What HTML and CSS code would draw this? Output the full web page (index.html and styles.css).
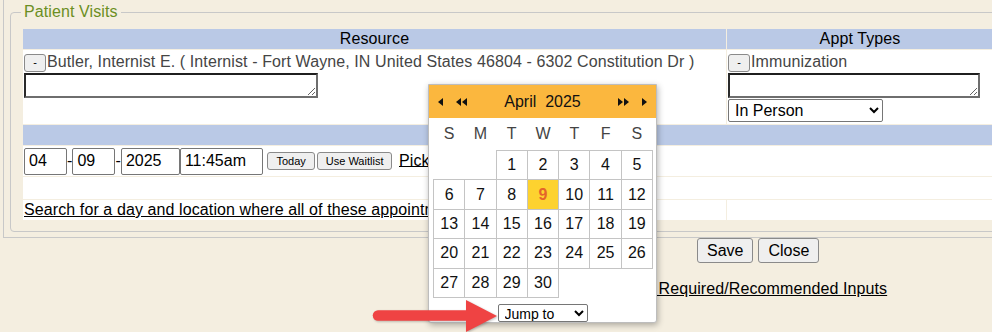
FILE: index.html
```html
<!DOCTYPE html>
<html>
<head>
  <link rel="stylesheet" href="styles.css">
</head>
<body>
  <div class="page">
    <div class="outer">
      <fieldset class="visits">
        <legend>Patient Visits</legend>
        <table class="grid">
          <colgroup><col class="col-res"><col class="col-appt"></colgroup>
          <tr class="head-row">
            <th>Resource</th>
            <th>Appt Types</th>
          </tr>
          <tr class="pick-row">
            <td>
              <div class="line"><button class="minus-btn">-</button><span class="res-name">Butler, Internist E. ( Internist - Fort Wayne, IN United States 46804 - 6302 Constitution Dr )</span></div>
              <textarea class="note note-res"></textarea>
            </td>
            <td>
              <div class="line"><button class="minus-btn">-</button><span class="appt-name">Immunization</span></div>
              <textarea class="note note-appt"></textarea>
              <select class="mode"><option>In Person</option><option>Telehealth</option></select>
            </td>
          </tr>
          <tr class="band-row">
            <td colspan="2"></td>
          </tr>
          <tr class="date-row">
            <td colspan="2"><input class="f f-mm" value="04">-<input class="f f-dd" value="09">-<input class="f f-yy" value="2025"><input class="f f-tm" value="11:45am"> <button class="small-btn">Today</button><button class="small-btn">Use Waitlist</button> <a href="#">Pick a time</a></td>
          </tr>
          <tr class="blank-row">
            <td colspan="2"></td>
          </tr>
          <tr class="search-row">
            <td><a href="#">Search for a day and location where all of these appointments are available</a></td>
            <td></td>
          </tr>
        </table>
      </fieldset>
    </div>
    <div class="actions">
      <button class="big-btn">Save</button>
      <button class="big-btn">Close</button>
    </div>
    <div class="req"><a href="#">&nbsp;Required/Recommended Inputs</a></div>
  </div>

  <!-- date picker popup, open over the form -->
  <div class="cal">
    <div class="cal-head">
      <span class="nav">
        <svg width="5" height="8" viewBox="0 0 5 8"><polygon points="5,0 0,4 5,8"/></svg>
        <svg width="11" height="8" viewBox="0 0 11 8"><polygon points="5,0 0,4 5,8"/><polygon points="11,0 6,4 11,8"/></svg>
      </span>
      <span class="cal-title">April&nbsp;&nbsp;2025</span>
      <span class="nav">
        <svg width="11" height="8" viewBox="0 0 11 8"><polygon points="0,0 5,4 0,8"/><polygon points="6,0 11,4 6,8"/></svg>
        <svg width="5" height="8" viewBox="0 0 5 8"><polygon points="0,0 5,4 0,8"/></svg>
      </span>
    </div>
    <table class="days">
      <thead>
        <tr><th>S</th><th>M</th><th>T</th><th>W</th><th>T</th><th>F</th><th>S</th></tr>
      </thead>
      <tbody>
        <tr><td class="off"></td><td class="off"></td><td>1</td><td>2</td><td>3</td><td>4</td><td>5</td></tr>
        <tr><td>6</td><td>7</td><td>8</td><td class="today">9</td><td>10</td><td>11</td><td>12</td></tr>
        <tr><td>13</td><td>14</td><td>15</td><td>16</td><td>17</td><td>18</td><td>19</td></tr>
        <tr><td>20</td><td>21</td><td>22</td><td>23</td><td>24</td><td>25</td><td>26</td></tr>
        <tr><td>27</td><td>28</td><td>29</td><td>30</td><td class="off"></td><td class="off"></td><td class="off"></td></tr>
      </tbody>
    </table>
    <div class="jump">
      <select><option>Jump to</option><option>Today</option></select>
    </div>
  </div>

  <svg class="pointer" width="132" height="36" viewBox="0 0 132 36">
    <line x1="10" y1="19.5" x2="100" y2="19.5" stroke="#ef4343" stroke-width="10.5" stroke-linecap="round"/>
    <polygon points="98,4 129,20 98,36" fill="#ef4343"/>
  </svg>
</body>
</html>
```

FILE: styles.css
```css
html, body {
  overflow: hidden;
}

body {
  margin: 0;
  background-color: #f4eee0;
  font-family: "Liberation Sans", Arial, sans-serif;
  font-size: 16px;
  letter-spacing: 0.1px;
  color: #000;
}

a {
  color: #000;
}

.page {
  width: 1100px;
}

.outer {
  margin-left: 3px;
  border-left: 1px solid #c8c8c8;
  border-bottom: 1px solid #c8c8c8;
  padding: 3px 0 5px 6px;
}

.visits {
  margin: 0;
  padding: 7px 11px 10px 11px;
  border: 1px solid #c8c8c8;
  border-radius: 4px;
  min-width: 0;
}

.visits legend {
  margin-left: -1px;
  padding: 0 3px;
  line-height: 18px;
  color: #6b8e23;
}

.grid {
  width: 972px;
  table-layout: fixed;
  border-spacing: 1px;
}

.col-res {
  width: 703px;
}

.col-appt {
  width: 266px;
}

.grid th,
.grid td {
  padding: 1px;
  vertical-align: top;
  background-color: #fff;
}

.grid th {
  background-color: #bac9e6;
  font-weight: normal;
  line-height: 18px;
}

.head-row { height: 20px; }
.pick-row { height: 74px; }
.band-row { height: 20px; }
.date-row { height: 30px; }
.blank-row { height: 22px; }
.search-row { height: 20px; }

.grid .band-row td {
  background-color: #bac9e6;
}

.line {
  display: flex;
  align-items: flex-start;
  height: 22px;
  line-height: 22px;
}

.res-name,
.appt-name {
  color: #454545;
}

.minus-btn {
  width: 22px;
  height: 18px;
  margin: 3px 1px 0 0;
  padding: 0 0 2px 0;
  font-family: "Liberation Sans", Arial, sans-serif;
  font-size: 11px;
  background-color: #efefef;
  border: 1px solid #8a8a8a;
  border-radius: 3px;
}

.note {
  display: block;
  box-sizing: border-box;
  height: 25px;
  margin: 0;
  border: 2px solid;
  border-color: #1f1f1f #6e6e6e #6e6e6e #2a2a2a;
  background-color: #fff;
}

.note-res {
  width: 294px;
}

.note-appt {
  width: 252px;
}

.mode {
  display: block;
  box-sizing: border-box;
  width: 155px;
  height: 23px;
  margin-top: 1px;
  padding: 0 2px;
  font-family: "Liberation Sans", Arial, sans-serif;
  font-size: 16px;
  color: #000;
  background-color: #fff;
  border: 1px solid #767676;
  border-radius: 2px;
}

.grid .date-row td {
  vertical-align: middle;
  padding: 0 1px;
  white-space: nowrap;
  overflow: hidden;
}

.f {
  box-sizing: border-box;
  height: 27px;
  margin: 0;
  padding: 1px 4px;
  font-family: "Liberation Sans", Arial, sans-serif;
  font-size: 16px;
  color: #000;
  border: 1px solid #767676;
  border-radius: 2px;
  vertical-align: middle;
}

.f-mm, .f-dd { width: 43px; }
.f-yy { width: 59px; }
.f-tm { width: 83px; }

.small-btn {
  height: 18px;
  margin: 0 2px 0 0;
  padding: 0 8px;
  font-family: "Liberation Sans", Arial, sans-serif;
  font-size: 11px;
  color: #000;
  background-color: #efefef;
  border: 1px solid #8a8a8a;
  border-radius: 3px;
  vertical-align: middle;
}

.actions {
  display: flex;
  gap: 5px;
  padding-left: 697px;
}

.big-btn {
  height: 25px;
  margin: 0;
  padding: 0 9px;
  font-family: "Liberation Sans", Arial, sans-serif;
  font-size: 16px;
  color: #000;
  background-color: #efefef;
  border: 1px solid #8a8a8a;
  border-radius: 3px;
}

.req {
  margin-top: 17px;
  padding-left: 654px;
  line-height: 18px;
}

/* calendar popup */
.cal {
  position: absolute;
  left: 428px;
  top: 84px;
  width: 229px;
  height: 239px;
  box-sizing: border-box;
  background-color: #fff;
  border: 1px solid #bdbdbd;
  border-radius: 0 0 3px 3px;
  box-shadow: 1px 2px 6px rgba(0, 0, 0, 0.3);
  letter-spacing: 0;
}

.cal-head {
  display: flex;
  align-items: center;
  height: 33px;
  padding: 0 9px;
  background-color: #fbb73e;
  color: #111;
}

.nav {
  display: flex;
  align-items: center;
  gap: 13px;
}

.nav svg {
  display: block;
  fill: #111;
}

.cal-title {
  flex: 1;
  text-align: center;
}

.days {
  width: 220px;
  margin: 0 4px;
  table-layout: fixed;
  border-collapse: collapse;
}

.days th {
  height: 32px;
  padding: 0;
  font-weight: normal;
  color: #444;
}

.days tbody tr {
  height: 29.4px;
}

.days td {
  padding: 0;
  text-align: center;
  color: #111;
  border: 1px solid #c4c4c4;
}

.days td.off {
  border: none;
}

.days td.today {
  background-color: #fdd22f;
  color: #e4652a;
  font-weight: bold;
}

.jump {
  margin-top: 6px;
  text-align: center;
}

.jump select {
  box-sizing: border-box;
  width: 90px;
  height: 18px;
  padding: 0 2px;
  font-family: "Liberation Sans", Arial, sans-serif;
  font-size: 14px;
  color: #000;
  background-color: #fff;
  border: 1px solid #767676;
  border-radius: 2px;
}

.pointer {
  position: absolute;
  left: 368px;
  top: 296px;
  filter: drop-shadow(1px 1px 1px rgba(0, 0, 0, 0.25));
}
```
